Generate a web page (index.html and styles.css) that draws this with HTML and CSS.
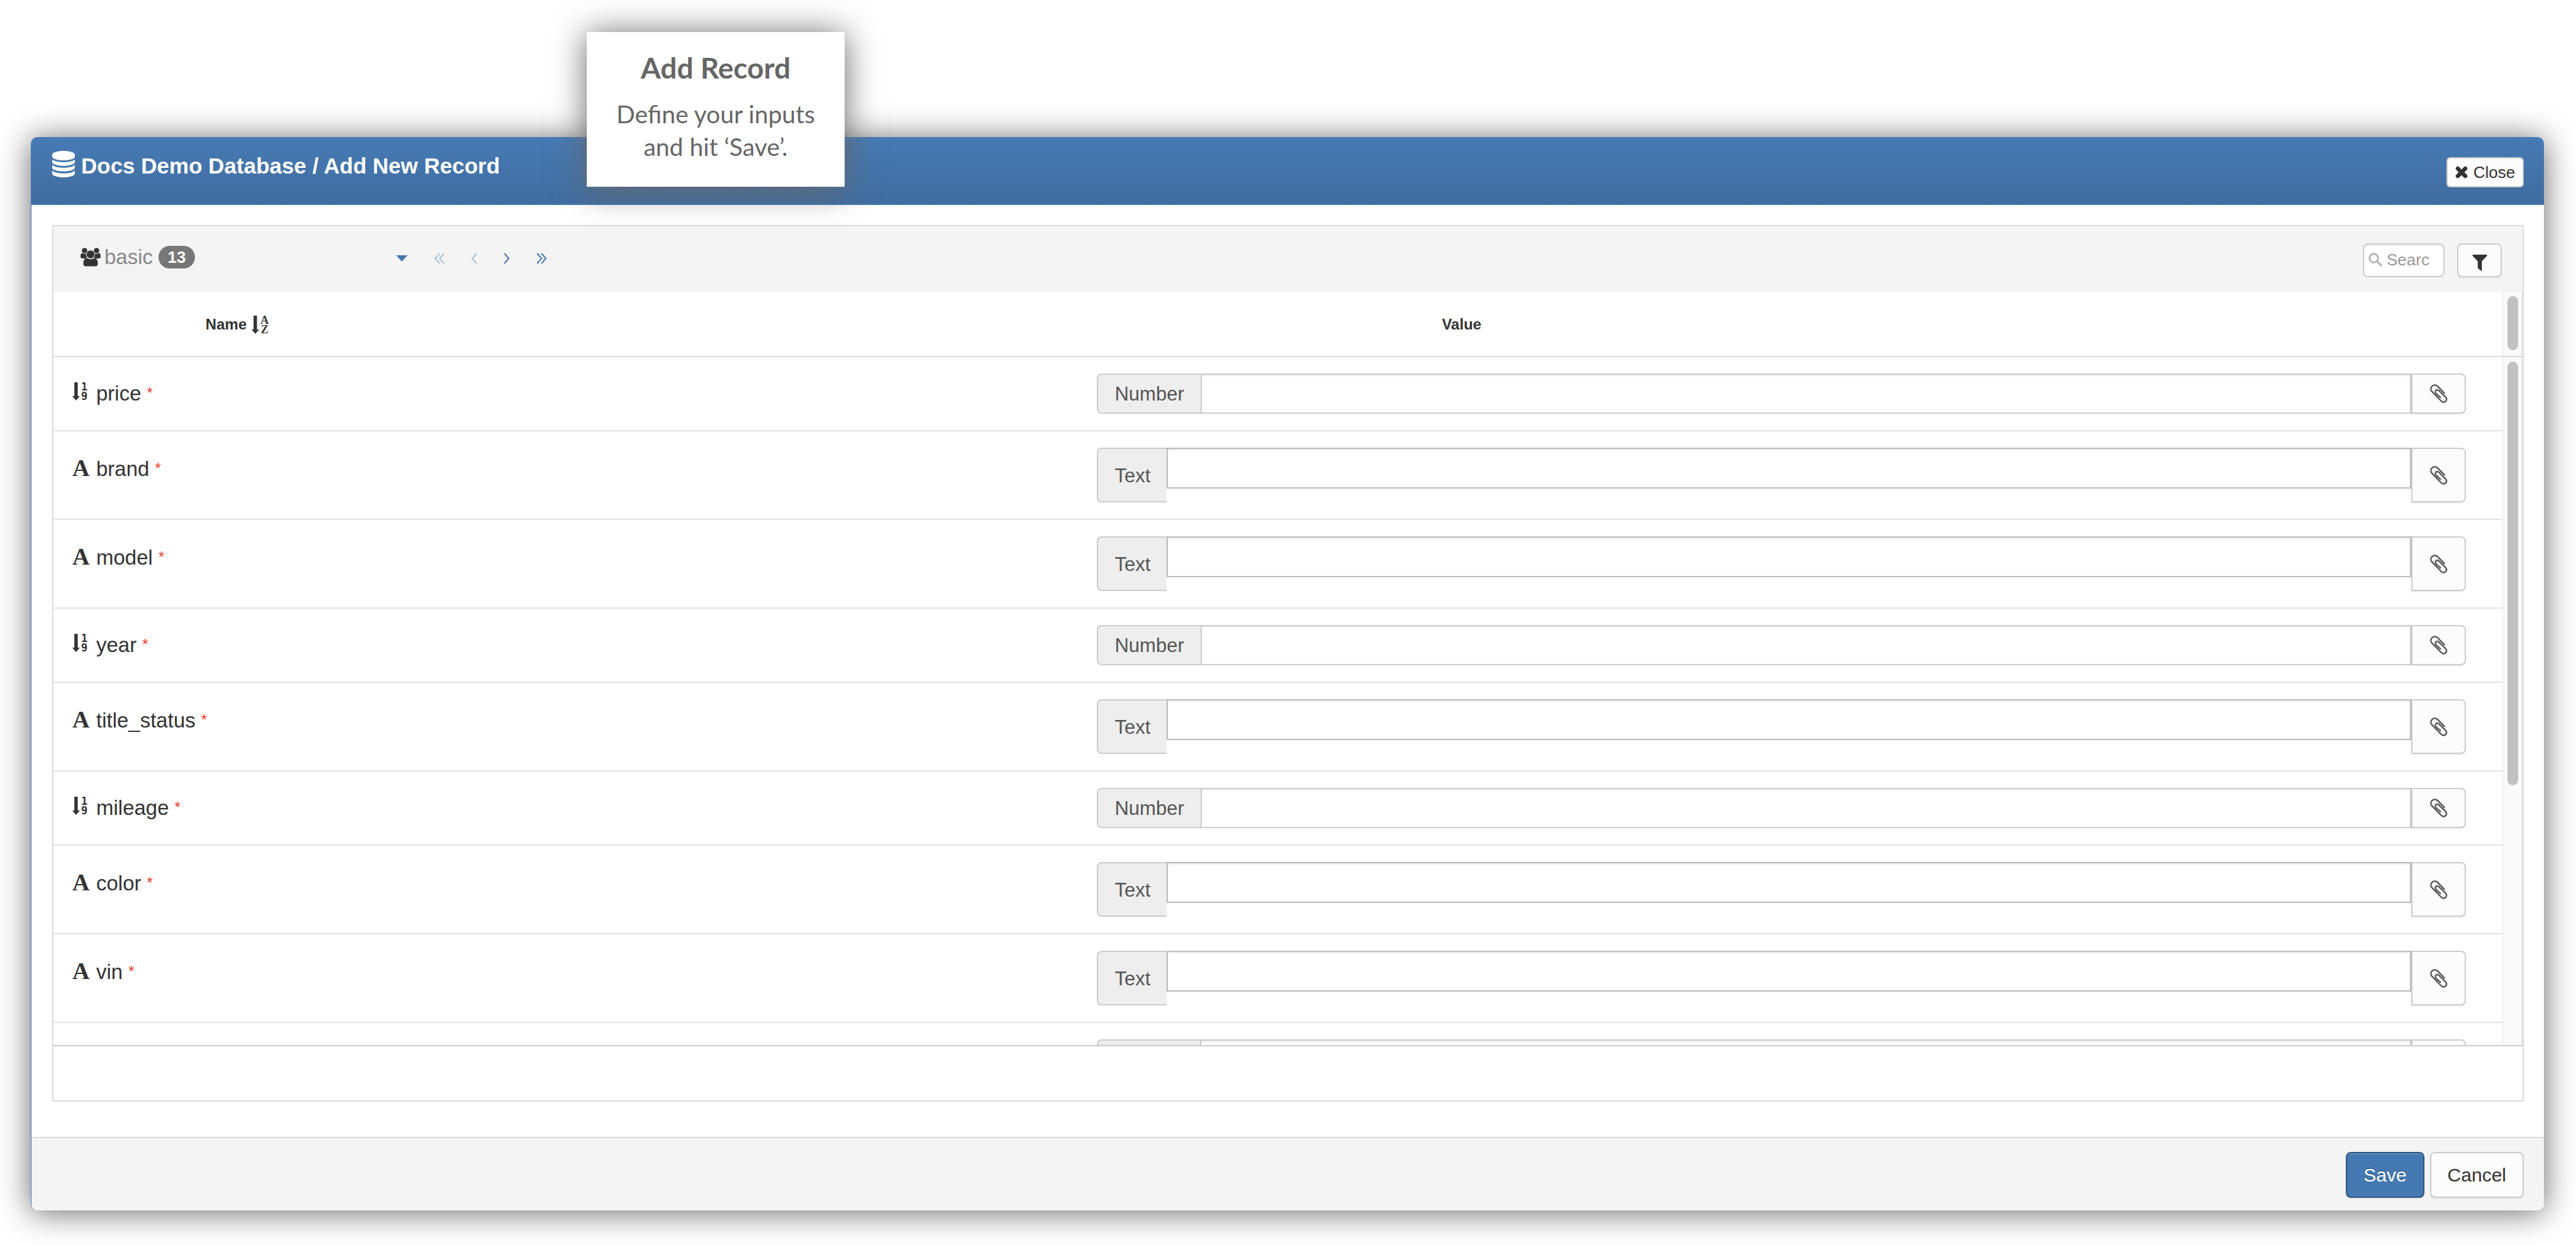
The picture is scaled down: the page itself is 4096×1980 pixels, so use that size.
FILE: index.html
```html
<!DOCTYPE html>
<html lang="en">
<head>
<meta charset="utf-8">
<title>Docs Demo Database / Add New Record</title>
<link rel="stylesheet" href="styles.css">
</head>
<body class="page">
<svg class="sprite" aria-hidden="true">
  <symbol id="i-database" viewBox="0 0 36 42">
    <path d="M0 6C0 2.5 8 0 18 0S36 2.5 36 6V9C36 12.500 28 15 18 15S0 12.500 0 9Z"/>
    <path d="M0 13.800C4 16.800 11 18 18 18S32 16.800 36 13.800V17.800C36 21.300 28 23.800 18 23.800S0 21.300 0 17.800Z"/>
    <path d="M0 22.600C4 25.600 11 26.800 18 26.800S32 25.600 36 22.600V26.600C36 30.100 28 32.600 18 32.600S0 30.100 0 26.600Z"/>
    <path d="M0 31.600C4 34.600 11 35.800 18 35.800S32 34.600 36 31.600V36C36 39.500 28 42 18 42S0 39.500 0 36Z"/>
  </symbol>
  <symbol id="i-users" viewBox="0 0 32 30">
    <circle cx="6.500" cy="4.500" r="4.300"/><circle cx="25.500" cy="4.500" r="4.300"/>
    <circle cx="16" cy="10.500" r="6.300"/>
    <path d="M2.500 8.600Q6 10.300 8.900 9.300Q8.500 13.500 11 16Q8.500 15.600 7 17H3Q0 17 0 14Q0 9 2.500 8.600Z"/>
    <path d="M29.500 8.600Q26 10.300 23.100 9.300Q23.500 13.500 21 16Q23.500 15.600 25 17H29Q32 17 32 14Q32 9 29.500 8.600Z"/>
    <path d="M9.500 16.300Q16 20.300 22.500 16.300Q27.300 16.500 27.500 25.500Q27.500 29.500 23.500 29.500H8.500Q4.500 29.500 4.500 25.500Q4.700 16.500 9.500 16.300Z"/>
  </symbol>
  <symbol id="i-close" viewBox="0 0 20 20">
    <path d="M4 4L16 16M16 4L4 16" stroke="currentColor" stroke-width="6.500" stroke-linecap="round"/>
  </symbol>
  <symbol id="i-search" viewBox="0 0 22 22">
    <circle cx="8.500" cy="8.500" r="6.800" fill="none" stroke="currentColor" stroke-width="3.200"/>
    <path d="M14 14L20 20" stroke="currentColor" stroke-width="3.600" stroke-linecap="round"/>
  </symbol>
  <symbol id="i-filter" viewBox="0 0 24 26">
    <path d="M1 0H23Q24 .600 23.500 1.800L15.300 10.500V25Q15 26 14 25.700L9.500 22Q8.800 21.300 8.800 20.500V10.500L.500 1.800Q0 .600 1 0Z"/>
  </symbol>
  <symbol id="i-clip" viewBox="150 104 160 176">
    <path d="M284 191L222 128C207 112 182 114 170 130C157 146 162 164 173 175L250 254C263 268 281 271 292 259C303 247 300 232 291 222L234 166C224 156 210 157 204 167C199 177 203 186 209 192L250 229" fill="none" stroke="currentColor" stroke-width="13"/>
  </symbol>
  <symbol id="i-left" viewBox="0 0 10 18"><path d="M9 1L2 9L9 17" fill="none" stroke="currentColor" stroke-width="2"/></symbol>
  <symbol id="i-right" viewBox="0 0 10 18"><path d="M1 1L8 9L1 17" fill="none" stroke="currentColor" stroke-width="2"/></symbol>
  <symbol id="i-first" viewBox="0 0 17 18"><path d="M9 1L2 9L9 17M16 1L9 9L16 17" fill="none" stroke="currentColor" stroke-width="2"/></symbol>
  <symbol id="i-last" viewBox="0 0 17 18"><path d="M1 1L8 9L1 17M8 1L15 9L8 17" fill="none" stroke="currentColor" stroke-width="2"/></symbol>
  <symbol id="i-caret" viewBox="0 0 18 10"><path d="M0 0H18L9 10Z"/></symbol>
  <symbol id="i-arrow" viewBox="0 0 12 29"><path d="M3.200 0H8.600V22H12L6 29L0 22H3.200Z"/></symbol>
</svg>

<main class="modal">
  <header class="modal-header">
    <h1 class="modal-title"><svg class="icon-db"><use href="#i-database"/></svg>Docs Demo Database / Add New Record</h1>
    <button class="btn btn-close" type="button"><svg class="icon-close"><use href="#i-close"/></svg>Close</button>
  </header>

  <div class="modal-body">
    <section class="panel">
      <div class="toolbar">
        <div class="group-tab"><svg class="icon-users"><use href="#i-users"/></svg><span class="group-name">basic</span><span class="badge">13</span></div>
        <nav class="pager">
          <button class="page-btn" type="button" aria-label="Choose group"><svg width="18" height="10"><use href="#i-caret"/></svg></button>
          <button class="page-btn" type="button" disabled aria-label="First"><svg width="17" height="18"><use href="#i-first"/></svg></button>
          <button class="page-btn" type="button" disabled aria-label="Previous"><svg width="10" height="18"><use href="#i-left"/></svg></button>
          <button class="page-btn" type="button" aria-label="Next"><svg width="10" height="18"><use href="#i-right"/></svg></button>
          <button class="page-btn" type="button" aria-label="Last"><svg width="17" height="18"><use href="#i-last"/></svg></button>
        </nav>
        <div class="tools">
          <label class="search"><svg class="icon-search"><use href="#i-search"/></svg><input class="search-input" type="text" placeholder="Searc" aria-label="Search"></label>
          <button class="btn btn-filter" type="button" aria-label="Filter"><svg class="icon-filter"><use href="#i-filter"/></svg></button>
        </div>
      </div>

      <div class="scroll-head">
        <table class="head-table">
          <thead>
            <tr>
              <th class="th-name" scope="col">Name<span class="sort sort-az"><svg class="arrow"><use href="#i-arrow"/></svg><span class="stack serif"><span>A</span><span>Z</span></span></span></th>
              <th scope="col">Value</th>
            </tr>
          </thead>
        </table>
        <div class="track"><div class="thumb thumb-head"></div></div>
      </div>

      <div class="scroll-body">
        <table class="fields">
          <tbody>
            <tr>
              <td class="cell-name"><span class="type"><span class="sort"><svg class="arrow"><use href="#i-arrow"/></svg><span class="stack mono"><span>1</span><span>9</span></span></span></span><label for="f1">price</label><span class="req">*</span></td>
              <td class="cell-value"><div class="group"><span class="addon">Number</span><input class="field" id="f1" type="text" inputmode="decimal"><button class="btn btn-clip" type="button" aria-label="Attach"><svg class="icon-clip"><use href="#i-clip"/></svg></button></div></td>
            </tr>
            <tr>
              <td class="cell-name"><span class="type type-text">A</span><label for="f2">brand</label><span class="req">*</span></td>
              <td class="cell-value"><div class="group group-text"><span class="addon">Text</span><textarea class="field" id="f2"></textarea><button class="btn btn-clip" type="button" aria-label="Attach"><svg class="icon-clip"><use href="#i-clip"/></svg></button></div></td>
            </tr>
            <tr>
              <td class="cell-name"><span class="type type-text">A</span><label for="f3">model</label><span class="req">*</span></td>
              <td class="cell-value"><div class="group group-text"><span class="addon">Text</span><textarea class="field" id="f3"></textarea><button class="btn btn-clip" type="button" aria-label="Attach"><svg class="icon-clip"><use href="#i-clip"/></svg></button></div></td>
            </tr>
            <tr>
              <td class="cell-name"><span class="type"><span class="sort"><svg class="arrow"><use href="#i-arrow"/></svg><span class="stack mono"><span>1</span><span>9</span></span></span></span><label for="f4">year</label><span class="req">*</span></td>
              <td class="cell-value"><div class="group"><span class="addon">Number</span><input class="field" id="f4" type="text" inputmode="decimal"><button class="btn btn-clip" type="button" aria-label="Attach"><svg class="icon-clip"><use href="#i-clip"/></svg></button></div></td>
            </tr>
            <tr>
              <td class="cell-name"><span class="type type-text">A</span><label for="f5">title_status</label><span class="req">*</span></td>
              <td class="cell-value"><div class="group group-text"><span class="addon">Text</span><textarea class="field" id="f5"></textarea><button class="btn btn-clip" type="button" aria-label="Attach"><svg class="icon-clip"><use href="#i-clip"/></svg></button></div></td>
            </tr>
            <tr>
              <td class="cell-name"><span class="type"><span class="sort"><svg class="arrow"><use href="#i-arrow"/></svg><span class="stack mono"><span>1</span><span>9</span></span></span></span><label for="f6">mileage</label><span class="req">*</span></td>
              <td class="cell-value"><div class="group"><span class="addon">Number</span><input class="field" id="f6" type="text" inputmode="decimal"><button class="btn btn-clip" type="button" aria-label="Attach"><svg class="icon-clip"><use href="#i-clip"/></svg></button></div></td>
            </tr>
            <tr>
              <td class="cell-name"><span class="type type-text">A</span><label for="f7">color</label><span class="req">*</span></td>
              <td class="cell-value"><div class="group group-text"><span class="addon">Text</span><textarea class="field" id="f7"></textarea><button class="btn btn-clip" type="button" aria-label="Attach"><svg class="icon-clip"><use href="#i-clip"/></svg></button></div></td>
            </tr>
            <tr>
              <td class="cell-name"><span class="type type-text">A</span><label for="f8">vin</label><span class="req">*</span></td>
              <td class="cell-value"><div class="group group-text"><span class="addon">Text</span><textarea class="field" id="f8"></textarea><button class="btn btn-clip" type="button" aria-label="Attach"><svg class="icon-clip"><use href="#i-clip"/></svg></button></div></td>
            </tr>
            <tr>
              <td class="cell-name"></td>
              <td class="cell-value"><div class="group"><span class="addon addon-empty"></span><input class="field" id="f9" type="text" inputmode="decimal" aria-label="Number"><button class="btn btn-clip" type="button" aria-label="Attach"></button></div></td>
            </tr>
          </tbody>
        </table>
        <div class="track"><div class="thumb thumb-body"></div></div>
      </div>
      <div class="panel-footer"></div>
    </section>
  </div>

  <footer class="modal-footer">
    <button class="btn btn-save" type="submit">Save</button>
    <button class="btn btn-cancel" type="button">Cancel</button>
  </footer>
</main>

<aside class="callout">
  <h2 class="callout-title">Add Record</h2>
  <p class="callout-text">Define your inputs<br>and hit ‘Save’.</p>
</aside>
</body>
</html>
```
FILE: styles.css
```css
* { box-sizing: border-box; }

.page {
  margin: 0;
  height: 100vh;
  padding: 218px 51px 55px 49px;
  display: flex;
  background: #fff;
  color: #333;
  font-family: "Liberation Sans", Arial, sans-serif;
  overflow: hidden;
}

.sprite { position: absolute; width: 0; height: 0; }
svg { display: block; fill: currentColor; flex: none; }

button, input, textarea { font-family: inherit; }

/* Dialog */
.modal {
  flex: 1;
  min-width: 0;
  display: flex;
  flex-direction: column;
  background: #fff;
  border-left: 1px solid #4678b2;
  border-radius: 10px;
  overflow: hidden;
  box-shadow: 0 3px 50px #666;
}

.modal-header {
  display: flex;
  justify-content: space-between;
  align-items: flex-start;
  height: 108px;
  padding: 0 32px 0 33px;
  background: linear-gradient(#477bb5, #406c9f);
  border-bottom: 2px solid #4678b2;
}

.modal-title {
  display: flex;
  align-items: flex-start;
  gap: 10px;
  margin: 0;
  padding-top: 22px;
  font-size: 35px;
  line-height: 48px;
  color: #fff;
}

.icon-db { width: 36px; height: 42px; }

.btn {
  display: flex;
  align-items: center;
  justify-content: center;
  background: #fcfcfc;
  border: 2px solid #ccc;
  border-radius: 8px;
  color: #333;
  padding: 0;
  box-shadow: 0 2px 2px rgba(0, 0, 0, .06);
}

.btn-close {
  gap: 9px;
  width: 123px;
  height: 48px;
  margin-top: 32px;
  border-radius: 6px;
  font-size: 26px;
}

.icon-close { width: 20px; height: 22px; }

.modal-body {
  flex: 1;
  min-height: 0;
  display: flex;
  padding: 32px 32px 56px 33px;
}

.panel {
  flex: 1;
  min-width: 0;
  display: flex;
  flex-direction: column;
  border: 2px solid #ddd;
}

/* Toolbar */
.toolbar {
  flex: none;
  display: flex;
  align-items: center;
  height: 104px;
  padding: 0 33px 0 43px;
  background: #f4f4f4;
}

.group-tab {
  display: flex;
  align-items: center;
  width: 502px;
  padding-bottom: 6px;
  font-size: 33px;
  line-height: 36px;
  color: #888;
}

.icon-users { width: 32px; height: 30px; color: #333; }
.group-name { margin: 0 9px 0 6px; }

.badge {
  width: 58px;
  height: 36px;
  border-radius: 18px;
  background: #777;
  color: #fff;
  font-size: 26px;
  font-weight: bold;
  text-align: center;
}

.pager { display: flex; align-items: center; gap: 42px; padding-bottom: 2px; }

.page-btn {
  padding: 0;
  border: 0;
  background: none;
  color: #4678b2;
}
.page-btn:disabled { color: #a9c1dc; }

.tools {
  display: flex;
  gap: 20px;
  margin-left: auto;
  padding-top: 4px;
}

.search {
  display: flex;
  align-items: center;
  gap: 7px;
  width: 130px;
  height: 54px;
  padding: 0 8px 2px 7px;
  background: #fff;
  border: 2px solid #ccc;
  border-radius: 8px;
  box-shadow: inset 0 2px 2px rgba(0, 0, 0, .075);
}

.icon-search { width: 22px; height: 22px; color: #bbb; }

.search-input {
  flex: 1;
  min-width: 0;
  padding: 0;
  border: 0;
  background: none;
  font-size: 26px;
}
.search-input::placeholder { color: #999; opacity: 1; }

.btn-filter { width: 71px; height: 54px; padding-top: 8px; }
.icon-filter { width: 24px; height: 26px; }

/* Column heads */
.scroll-head {
  flex: none;
  display: flex;
  height: 104px;
  border-bottom: 2px solid #ddd;
}

.head-table, .fields {
  flex: 1;
  min-width: 0;
  border-spacing: 0;
  table-layout: fixed;
}

.head-table { height: 102px; }
.head-table th { padding: 2px 0 0; font-size: 24px; line-height: 30px; }
.head-table .th-name { width: 15%; }

.sort { display: inline-flex; gap: 2px; height: 29px; vertical-align: bottom; }
.sort-az { margin-left: 8px; }
.arrow { width: 12px; height: 29px; }

.stack {
  display: flex;
  flex-direction: column;
  justify-content: space-between;
  align-items: center;
  font-weight: bold;
}
.stack span { height: 14px; line-height: 14px; }
.serif { font-family: "Liberation Serif", serif; font-size: 18px; }
.mono { font-family: "DejaVu Sans Mono", monospace; font-size: 17px; }

/* Scrollbars */
.track {
  flex: none;
  width: 32px;
  padding: 7px 5px 7px 7px;
  background: #fafafa;
  border: solid;
  border-width: 0 2px 0 1px;
  border-color: #e8e8e8;
}
.thumb { width: 17px; border-radius: 9px; background: #c1c1c1; }
.thumb-head { height: 86px; }
.thumb-body { height: 62.4%; }

/* Fields */
.scroll-body {
  flex: 1;
  min-height: 0;
  display: flex;
  overflow: hidden;
}

.fields td { padding: 0; border-bottom: 2px solid #e2e2e2; vertical-align: top; }

.fields .cell-name {
  width: 42%;
  padding: 38px 0 0 30px;
  font-size: 33px;
  line-height: 40px;
  white-space: nowrap;
}

.type { display: inline-block; width: 38px; }
.type .sort { vertical-align: baseline; }
.type-text { font: bold 38px/40px "Liberation Serif", "Times New Roman", serif; }

.req { margin-left: 9px; color: #f03c2e; font-size: 24px; line-height: 24px; vertical-align: 4px; }

.fields .cell-value { padding: 26px 58px 26px 24px; }

.group { display: flex; align-items: stretch; height: 64px; }
.group-text { height: 87px; }

.addon {
  display: flex;
  align-items: center;
  padding: 2px 26px 0;
  background: #eee;
  border: 2px solid #ccc;
  border-right: 0;
  border-radius: 8px 0 0 8px;
  color: #555;
  font-size: 31px;
}
.addon-empty { width: 164px; }

.field {
  flex: 1;
  min-width: 0;
  margin: 0;
  padding: 12px 26px;
  border: 2px solid #ccc;
  border-radius: 0;
  background: #fff;
  font-size: 31px;
  resize: none;
  outline: 0;
  box-shadow: inset 0 2px 2px rgba(0, 0, 0, .075);
}
.group-text .field { height: 65px; border-color: #bbb; }

.btn-clip { width: 87px; border-radius: 0 8px 8px 0; color: #555; }
.icon-clip { width: 29px; height: 32px; }

.panel-footer { flex: none; height: 88px; border-top: 2px solid #ccc; }

/* Dialog actions */
.modal-footer {
  flex: none;
  display: flex;
  justify-content: flex-end;
  gap: 9px;
  height: 117px;
  padding: 22px 32px 20px;
  background: #f4f4f4;
  border-top: 2px solid #ddd;
}
.modal-footer .btn { padding: 0 26px; font-size: 30px; }
.modal-footer .btn-save {
  background: #4579b1;
  border-color: #2d5580;
  color: #fff;
  text-shadow: 0 -2px 0 rgba(0, 0, 0, .2);
  box-shadow: inset 0 2px 0 rgba(255, 255, 255, .15), 0 2px 2px rgba(0, 0, 0, .05);
}

/* Callout that lies over the dialog */
.callout {
  position: absolute;
  top: 51px;
  left: 933px;
  width: 410px;
  height: 246px;
  padding-top: 29px;
  background: #fff;
  box-shadow: 0 3px 50px #666;
  color: #666;
  font-family: Lato, sans-serif;
  text-align: center;
}
.callout-title { margin: 0; font-size: 46px; line-height: 56px; }
.callout-text { margin: 19px 0 0; font-size: 39px; line-height: 52px; }
```
